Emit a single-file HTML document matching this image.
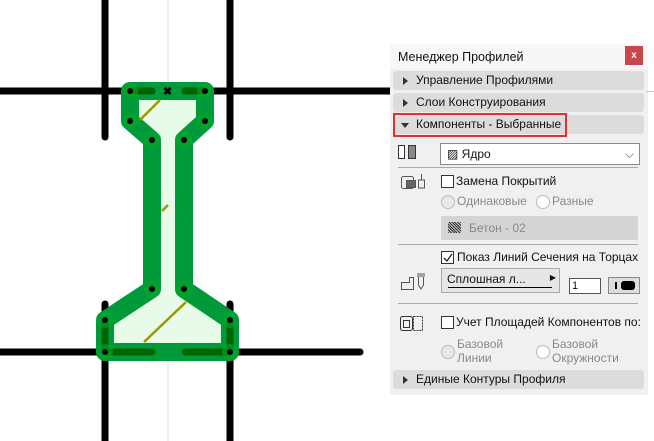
<!DOCTYPE html><html><head><meta charset="utf-8"><style>
body{margin:0;width:654px;height:441px;background:#fff;position:relative;overflow:hidden;font-family:"Liberation Sans",sans-serif;font-size:12px;color:#111}
.a{position:absolute}
.hdr{position:absolute;left:393px;width:251px;height:19px;background:#dcdcdc;border-radius:3px;line-height:19px}
.hdr span{position:absolute;left:23px}
.tri{position:absolute;left:10px;top:6px;width:0;height:0;border-top:4px solid transparent;border-bottom:4px solid transparent;border-left:5px solid #333}
.cb{position:absolute;width:11px;height:11px;border:1px solid #333;background:#fff}
.rd{position:absolute;width:12px;height:12px;border:1px solid #bbb;border-radius:50%;background:#fff}
.g{color:#888}
.sep{position:absolute;left:398px;width:240px;height:1px;background:#aaa}
</style></head><body>
<svg class="a" style="left:0;top:0" width="390" height="441">
<line x1="168" y1="0" x2="168" y2="441" stroke="#ddd" stroke-width="1"/>
<g stroke="#000" stroke-width="7" stroke-linecap="round">
<line x1="0" y1="91" x2="390" y2="91"/><line x1="0" y1="352" x2="360" y2="352"/>
<line x1="105" y1="0" x2="105" y2="137"/><line x1="230" y1="0" x2="230" y2="137"/>
<line x1="105" y1="304" x2="105" y2="441"/><line x1="230" y1="304" x2="230" y2="441"/>
</g>
<polygon points="130,91 205,91 205,121 184,140 184,289 230,320 230,352 105,352 105,320 152,289 152,140 130,121" fill="#e8fbe8" stroke="#009a3a" stroke-width="18" stroke-linejoin="round"/>
<g stroke="#9a9a00" stroke-width="2.5"><line x1="160" y1="100" x2="140" y2="120"/><line x1="168" y1="205" x2="162" y2="211"/><line x1="186" y1="302" x2="144" y2="342"/></g>
<g stroke="#006400" stroke-width="7" stroke-linecap="round"><line x1="132" y1="91" x2="152" y2="91"/><line x1="185" y1="91" x2="203" y2="91"/><line x1="108" y1="352" x2="152" y2="352"/><line x1="185" y1="352" x2="227" y2="352"/><line x1="105" y1="322" x2="105" y2="350"/><line x1="230" y1="322" x2="230" y2="350"/></g>
<g fill="#00aa22" opacity="0.6"><circle cx="130" cy="91" r="8"/><circle cx="205" cy="91" r="8"/><circle cx="130" cy="121" r="8"/><circle cx="205" cy="121" r="8"/><circle cx="152" cy="140" r="8"/><circle cx="184" cy="140" r="8"/><circle cx="152" cy="289" r="8"/><circle cx="184" cy="289" r="8"/><circle cx="105" cy="320" r="8"/><circle cx="230" cy="320" r="8"/><circle cx="105" cy="352" r="8"/><circle cx="230" cy="352" r="8"/></g>
<g fill="#000"><circle cx="130" cy="91" r="3"/><circle cx="205" cy="91" r="3"/><circle cx="130" cy="121" r="3"/><circle cx="205" cy="121" r="3"/><circle cx="152" cy="140" r="3"/><circle cx="184" cy="140" r="3"/><circle cx="152" cy="289" r="3"/><circle cx="184" cy="289" r="3"/><circle cx="105" cy="320" r="3"/><circle cx="230" cy="320" r="3"/><circle cx="105" cy="352" r="3"/><circle cx="230" cy="352" r="3"/></g>
<text x="163" y="95" font-size="11" font-weight="bold" fill="#000" font-family="Liberation Sans">✖</text>
</svg>
<div class="a" style="left:390px;top:44px;width:258px;height:351px;background:#f0f0f0"></div>
<div class="a" style="left:390px;top:44px;width:258px;height:25px;background:#f7f7f7"></div>
<div class="a" style="left:646px;top:91px;width:8px;height:1px;background:#ccc"></div>
<div class="a" style="left:398px;top:50px;font-size:12.5px">Менеджер Профилей</div>
<div class="a" style="left:625px;top:46px;width:18px;height:19px;background:#c9474b;color:#fff;font-size:10px;text-align:center;line-height:19px;font-weight:bold">x</div>
<div class="hdr" style="top:71px"><div class="tri"></div><span>Управление Профилями</span></div>
<div class="hdr" style="top:93px"><div class="tri"></div><span>Слои Конструирования</span></div>
<div class="hdr" style="top:115px"><div class="a" style="left:8px;top:8px;border-left:4px solid transparent;border-right:4px solid transparent;border-top:5px solid #333"></div><span>Компоненты - Выбранные</span></div>
<div class="a" style="left:393px;top:113px;width:174px;height:24px;border:2px solid #e03030;box-sizing:border-box"></div>
<svg class="a" style="left:398px;top:145px" width="20" height="14"><rect x="0.5" y="0.5" width="6" height="13" fill="#fff" stroke="#333"/><rect x="10.5" y="0.5" width="7" height="13" fill="#888" stroke="#333"/></svg>
<div class="a" style="left:440px;top:143px;width:198px;height:20px;border:1px solid #888;background:#fff;line-height:20px"><span style="margin-left:6px">▨ Ядро</span><span style="position:absolute;right:5px;top:0;color:#555">⌵</span></div>
<div class="sep" style="top:167px"></div>
<svg class="a" style="left:400px;top:172px" width="30" height="20" fill="none" stroke="#555"><rect x="1.5" y="4.5" width="12" height="12" rx="2"/><rect x="6.5" y="8.5" width="9" height="7" fill="#666"/><path d="M21.5 2v6M18.5 8h6v8h-6z"/></svg>
<div class="cb" style="left:441px;top:175px"></div><div class="a" style="left:456px;top:174px">Замена Покрытий</div>
<div class="rd" style="left:441px;top:195px;background:#e8e8e8"></div><div class="a g" style="left:457px;top:194px">Одинаковые</div>
<div class="rd" style="left:536px;top:195px"></div><div class="a g" style="left:552px;top:194px">Разные</div>
<div class="a" style="left:441px;top:216px;width:197px;height:24px;background:#d4d4d4;line-height:24px"><span style="display:inline-block;width:13px;height:11px;margin:0 8px 0 7px;vertical-align:-1px;background:repeating-linear-gradient(45deg,#333 0 1px,#ccc 1px 2px)"></span><span class="g">Бетон - 02</span></div>
<div class="sep" style="top:244px"></div>
<div class="cb" style="left:441px;top:251px"></div><svg class="a" style="left:442px;top:252px" width="11" height="11"><path d="M2 6l3 3 5-7" fill="none" stroke="#222" stroke-width="1.3"/></svg><div class="a" style="left:457px;top:250px">Показ Линий Сечения на Торцах</div>
<svg class="a" style="left:400px;top:272px" width="30" height="20" fill="none" stroke="#555"><path d="M1.5 10.5h8v-5h4v12h-12z"/><path d="M17 2h8M17 4h8M18.5 5v8l2.5 4 2.5-4V5"/></svg>
<div class="a" style="left:441px;top:268px;width:117px;height:23px;background:#e6e6e6;border:1px solid #aaa"><span class="a" style="left:5px;top:3px">Сплошная л...</span><div class="a" style="left:6px;top:18px;width:104px;height:1px;background:#000"></div><span class="a" style="right:3px;top:4px;font-size:8px">▶</span></div>
<div class="a" style="left:569px;top:278px;width:28px;height:14px;border:1px solid #555;background:#fff;font-size:11px;line-height:14px;padding-left:2px;box-sizing:content-box">1</div>
<div class="a" style="left:608px;top:277px;width:30px;height:15px;border:1px solid #888;background:#ddd"><div class="a" style="left:6px;top:4px;width:2px;height:7px;background:#000"></div><div class="a" style="left:12px;top:3px;width:14px;height:9px;background:#000;border-radius:3px"></div></div>
<div class="sep" style="top:303px"></div>
<svg class="a" style="left:399px;top:313px" width="30" height="20" fill="none" stroke="#333"><rect x="1.5" y="3.5" width="12" height="14" rx="2"/><path d="M4.5 7.5h6v7h-6z"/><rect x="14.5" y="3.5" width="9" height="14" stroke-dasharray="2 1"/></svg>
<div class="cb" style="left:441px;top:316px"></div><div class="a" style="left:456px;top:315px">Учет Площадей Компонентов по:</div>
<div class="rd" style="left:441px;top:345px;background:#e8e8e8"></div><div class="a g" style="left:457px;top:337px;line-height:14px">Базовой<br>Линии</div>
<div class="rd" style="left:536px;top:345px"></div><div class="a g" style="left:552px;top:337px;line-height:14px">Базовой<br>Окружности</div>
<div class="hdr" style="top:370px"><div class="tri"></div><span>Единые Контуры Профиля</span></div>
</body></html>
